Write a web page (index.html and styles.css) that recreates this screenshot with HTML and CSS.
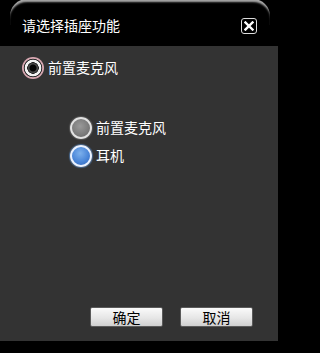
FILE: index.html
```html
<!DOCTYPE html>
<html lang="zh">
<head>
<meta charset="utf-8">
<link rel="stylesheet" href="styles.css">
</head>
<body>
<div class="dialog">
  <div class="titlebar">
    <span class="title">请选择插座功能</span>
    <span class="close">
      <svg width="10" height="10" viewBox="0 0 10 10"><path d="M1.5 1.5 L8.5 8.5 M8.5 1.5 L1.5 8.5" stroke="#fff" stroke-width="2.4" stroke-linecap="square"/></svg>
    </span>
  </div>
  <div class="content">
    <div class="row top-row">
      <span class="radio radio-pink"></span>
      <span class="label">前置麦克风</span>
    </div>
    <div class="group">
      <div class="row">
        <span class="radio radio-gray"></span>
        <span class="label">前置麦克风</span>
      </div>
      <div class="row">
        <span class="radio radio-blue"></span>
        <span class="label">耳机</span>
      </div>
    </div>
    <div class="buttons">
      <span class="btn">确定</span>
      <span class="btn">取消</span>
    </div>
  </div>
  <div class="footer"></div>
</div>
</body>
</html>
```
FILE: styles.css
```css
html, body {
  margin: 0;
  padding: 0;
  background: #000;
}
.dialog {
  width: 278px;
  height: 353px;
  display: flex;
  flex-direction: column;
  font-family: "Noto Sans CJK SC", "Noto Sans", sans-serif;
  font-size: 14px;
  color: #fff;
  background: #000;
}
.titlebar {
  position: relative;
  height: 46px;
  box-sizing: border-box;
  display: flex;
  align-items: flex-start;
  padding: 16px 21px 0 22px;
  background: #000;
}
.titlebar::before {
  content: "";
  position: absolute;
  top: -1px;
  left: 10px;
  right: 8px;
  height: 26px;
  border-radius: 17px 17px 0 0;
  box-shadow: inset 0 4px 2px -1px #a8a8a8;
}
.title {
  line-height: 18px;
}
.close {
  margin-left: auto;
  margin-top: 2px;
  width: 14px;
  height: 14px;
  border: 1px solid #ddd;
  border-radius: 3px;
  display: flex;
  align-items: center;
  justify-content: center;
}
.content {
  flex: 1;
  background: #333;
  display: flex;
  flex-direction: column;
  padding: 11px 25px 14px 22px;
}
.row {
  display: flex;
  align-items: center;
  gap: 4px;
  height: 22px;
}
.label {
  line-height: 18px;
  margin-top: -2px;
}
.group {
  margin-top: 38px;
  margin-left: 48px;
  display: flex;
  flex-direction: column;
  gap: 6px;
}
.radio {
  width: 22px;
  height: 22px;
  border-radius: 50%;
  box-sizing: border-box;
  flex: none;
}
.radio-pink {
  background: radial-gradient(circle at center,
    #050505 0 3px, #4a4a4a 4px 4.5px, #1a1a1a 5.5px,
    #f2f2f2 6px 8px, #2e2e2e 8.6px 9px, #d6a6b0 9.6px 11px);
}
.radio-gray {
  border: 2px solid #e2e2e2;
  background: radial-gradient(circle at 45% 40%, #999 0, #7a7a7a 60%, #5e5e5e 100%);
  box-shadow: 0 0 1px 1px #555;
}
.radio-blue {
  border: 2px solid #eaf2ff;
  background: radial-gradient(circle at 45% 35%, #7cb0ec 0, #4a86d8 55%, #2e62b8 100%);
  box-shadow: 0 0 1px 1px #4a6a90;
}
.buttons {
  margin-top: auto;
  display: flex;
  justify-content: flex-end;
  gap: 17px;
}
.btn {
  width: 73px;
  height: 20px;
  box-sizing: border-box;
  border: 1px solid #5a5a5a;
  border-radius: 2px;
  background: linear-gradient(#fafafa, #e6e6e6 55%, #cfcfcf);
  color: #000;
  display: flex;
  align-items: center;
  justify-content: center;
  line-height: 18px;
}
.footer {
  height: 12px;
  background: #000;
}
```
